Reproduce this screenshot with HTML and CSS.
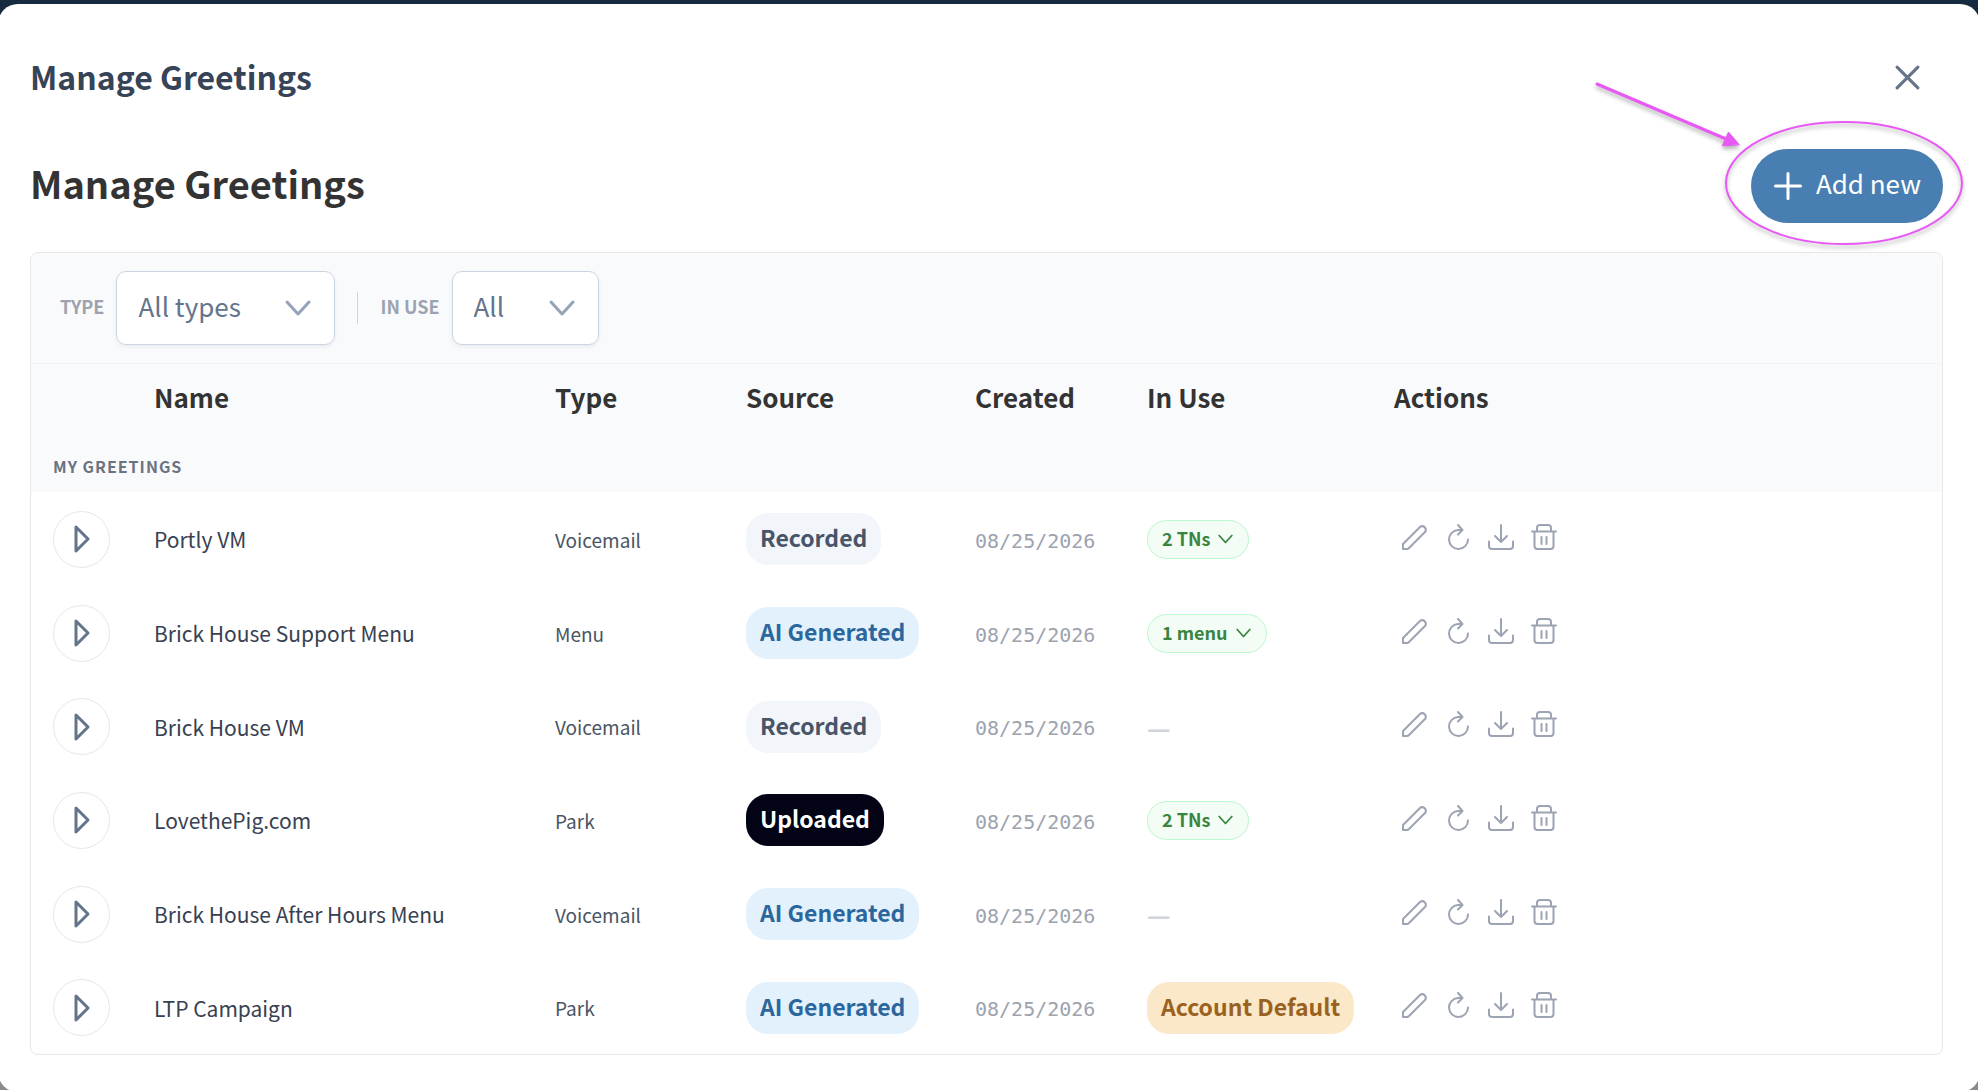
FILE: index.html
```html
<!DOCTYPE html>
<html lang="en">
<head>
  <meta charset="UTF-8">
  <meta name="viewport" content="width=device-width, initial-scale=1.0">
  <title>Manage Greetings</title>
  <link rel="stylesheet" href="styles.css">
</head>
<body>
<svg class="sprite" aria-hidden="true">
  <symbol id="play" viewBox="0 0 16 28"><path d="M2 2v24l12-12z"/></symbol>
  <symbol id="chevron" viewBox="0 0 26 16"><path d="M2 2l11 12L24 2"/></symbol>
  <symbol id="edit" viewBox="0 0 26 26"><path d="M1 25v-5L18.500 2.500a3.800 3.800 0 0 1 5 5L7 24q-1 1-2 1z"/></symbol>
  <symbol id="redo" viewBox="0 0 26 26"><path d="M17 6H13A9.500 9.500 0 1 0 23 15.500M13 1l4.500 5L13 10.500"/></symbol>
  <symbol id="download" viewBox="0 0 26 26"><path d="M13 1v17M7 12l6 6 6-6M1 17.500V22q0 3 3 3h18q3 0 3-3v-4.500"/></symbol>
  <symbol id="trash" viewBox="0 0 26 26"><path d="M1 7.500h24M3.500 7.500V22q0 3 3 3h13q3 0 3-3V7.500M6 7.500V4q0-3 3-3h8q3 0 3 3v3.500M10.500 13v7M15.500 13v7"/></symbol>
</svg>

<div class="modal">
  <header class="modal-header">
    <h1>Manage Greetings</h1>
    <button class="btn-close" aria-label="Close">
      <svg viewBox="0 0 24 24"><path d="M2 2l20 20M22 2L2 22"/></svg>
    </button>
  </header>

  <div class="title-bar">
    <h2>Manage Greetings</h2>
    <div class="add-wrap">
      <button class="btn-add">
        <svg viewBox="0 0 28 28"><path d="M14 1.500v25M1.500 14h25"/></svg>
        <span>Add new</span>
      </button>
      <svg class="callout" viewBox="0 0 372 166" aria-hidden="true">
        <ellipse cx="249" cy="102" rx="118" ry="61"/>
        <path class="line" d="M2 3L131 58"/>
        <path class="head" d="M144 63.500L133.500 51L127.500 64.500z"/>
      </svg>
    </div>
  </div>

  <section class="card">
    <div class="filters">
      <label for="type">Type</label>
      <div class="select select-type">
        <select id="type"><option>All types</option></select>
        <svg><use href="#chevron"/></svg>
      </div>
      <span class="divider"></span>
      <label for="inuse">In use</label>
      <div class="select select-use">
        <select id="inuse"><option>All</option></select>
        <svg><use href="#chevron"/></svg>
      </div>
    </div>

    <table>
      <colgroup>
        <col class="c-play"><col class="c-name"><col class="c-type"><col class="c-source"><col class="c-created"><col class="c-use"><col>
      </colgroup>
      <thead>
        <tr>
          <th></th>
          <th>Name</th>
          <th>Type</th>
          <th>Source</th>
          <th>Created</th>
          <th>In Use</th>
          <th>Actions</th>
        </tr>
        <tr class="group"><th colspan="7">My greetings</th></tr>
      </thead>
      <tbody id="rows"></tbody>
    </table>
  </section>
</div>

<script>
  const greetings = [
    ["Portly VM", "Voicemail", "Recorded", "2 TNs"],
    ["Brick House Support Menu", "Menu", "AI Generated", "1 menu"],
    ["Brick House VM", "Voicemail", "Recorded", ""],
    ["LovethePig.com", "Park", "Uploaded", "2 TNs"],
    ["Brick House After Hours Menu", "Voicemail", "AI Generated", ""],
    ["LTP Campaign", "Park", "AI Generated", "Account Default"]
  ];

  const badgeClass = { "Recorded": "recorded", "AI Generated": "ai", "Uploaded": "uploaded" };
  const icon = (name) => `<svg><use href="#${name}"/></svg>`;

  const usage = (text) => {
    if (!text) return `<span class="none">—</span>`;
    if (text === "Account Default") return `<span class="badge default">${text}</span>`;
    return `<button class="usage">${text}${icon("chevron")}</button>`;
  };

  const actions = ["edit", "redo", "download", "trash"]
    .map(a => `<button aria-label="${a}">${icon(a)}</button>`).join('');

  document.getElementById("rows").innerHTML = greetings.map(([name, type, source, use]) => `
    <tr>
      <td><button class="btn-play" aria-label="Play ${name}">${icon("play")}</button></td>
      <td class="name">${name}</td>
      <td class="type">${type}</td>
      <td><span class="badge ${badgeClass[source]}">${source}</span></td>
      <td class="created">08/25/2026</td>
      <td>${usage(use)}</td>
      <td><div class="actions">${actions}</div></td>
    </tr>`).join('');
</script>
</body>
</html>
```
FILE: styles.css
```css
* {
  box-sizing: border-box;
}
body {
  margin: 0;
  padding-top: 4px;
  min-height: 100vh;
  background: linear-gradient(#172b40 50%, #8a8a8a 50%);
  font-family: "Noto Sans CJK SC", "Noto Sans", sans-serif;
  color: #333;
  overflow: hidden;
}
button, select {
  font-family: inherit;
  color: inherit;
  margin: 0;
  padding: 0;
  border: 0;
  background: none;
  cursor: pointer;
}
svg {
  display: block;
  fill: none;
  stroke: currentColor;
  stroke-width: 2;
  stroke-linecap: round;
  stroke-linejoin: round;
  overflow: visible;
}
symbol {
  overflow: visible;
}
.sprite {
  position: absolute;
  width: 0;
  height: 0;
}
.modal {
  min-height: calc(100vh - 2px);
  margin: 0 -2px;
  padding: 45px 37px 34px 32px;
  background: #fff;
  border-radius: 20px;
}
.modal-header {
  display: flex;
  justify-content: space-between;
  align-items: center;
  height: 56px;
  padding-right: 23px;
}
h1, h2 {
  margin: 0;
  font-weight: 600;
}
h1 {
  padding-bottom: 2px;
  font-size: 32px;
  line-height: 48px;
  color: #374357;
}
.btn-close {
  color: #64748b;
}
.btn-close svg {
  width: 25px;
  height: 25px;
  stroke-width: 3;
}
.title-bar {
  display: flex;
  justify-content: space-between;
  align-items: center;
  margin: 44px 0 29px;
}
h2 {
  padding-bottom: 6px;
  font-size: 38px;
  line-height: 56px;
}
.add-wrap {
  position: relative;
}
.btn-add {
  display: flex;
  align-items: center;
  gap: 14px;
  height: 74px;
  padding: 0 22px 0 23px;
  border-radius: 37px;
  background: #487eb1;
  color: #fff;
  font-size: 26px;
  line-height: 36px;
}
.btn-add span {
  padding-bottom: 6px;
}
.btn-add svg {
  width: 28px;
  height: 28px;
  stroke-width: 3;
}
/* highlight drawn over the button */
.callout {
  position: absolute;
  right: -24px;
  top: -68px;
  width: 372px;
  height: 166px;
  color: #e858f5;
  pointer-events: none;
  filter: drop-shadow(0 3px 2px rgba(0, 0, 0, 0.3));
}
.callout .line {
  stroke-width: 3;
}
.callout .head {
  fill: currentColor;
  stroke-width: 1;
}
.card {
  border: 1px solid #e5e7eb;
  border-radius: 8px;
  overflow: hidden;
}
.filters {
  display: flex;
  align-items: center;
  height: 111px;
  padding: 0 29px;
  background: #f9fafc;
  border-bottom: 1px solid #f1f3f5;
}
.filters label {
  padding-bottom: 4px;
  font-size: 18px;
  font-weight: 700;
  line-height: 24px;
  text-transform: uppercase;
  color: #9ca3af;
}
.select {
  position: relative;
  height: 74px;
  margin-left: 12px;
}
.select-type {
  width: 219px;
}
.select-use {
  width: 147px;
}
.select select {
  appearance: none;
  width: 100%;
  height: 100%;
  padding: 0 60px 5px 21px;
  border: 1px solid #cbd5e1;
  border-radius: 10px;
  background: #fff;
  box-shadow: 0 2px 4px rgba(15, 23, 42, 0.06);
  font-size: 26px;
  line-height: 36px;
  color: #64748b;
}
.select svg {
  position: absolute;
  top: 29px;
  right: 24px;
  width: 26px;
  height: 16px;
  color: #94a3b8;
  stroke-width: 3;
  pointer-events: none;
}
.divider {
  width: 1px;
  height: 32px;
  margin: 0 22px;
  background: #d1d5db;
}
table {
  width: 100%;
  table-layout: fixed;
  border-collapse: collapse;
}
.c-play { width: 101px; }
.c-name { width: 401px; }
.c-type { width: 191px; }
.c-source { width: 229px; }
.c-created { width: 172px; }
.c-use { width: 247px; }
th, td {
  padding: 0 0 0 22px;
  text-align: left;
  white-space: nowrap;
}
thead {
  background: #f9fafc;
}
th {
  height: 70px;
  padding-bottom: 4px;
  font-size: 26px;
  line-height: 36px;
  font-weight: 700;
}
.group th {
  height: 58px;
  padding: 6px 0 0 22px;
  font-size: 16px;
  line-height: 24px;
  letter-spacing: 1px;
  text-transform: uppercase;
  color: #6b7280;
}
td {
  height: 94px;
}
tr:nth-child(3n) td {
  height: 93px;
}
.name {
  font-size: 21px;
  color: #374151;
}
.type {
  font-size: 19px;
  color: #4b5563;
}
.created {
  padding-top: 3px;
  font-family: "DejaVu Sans Mono", monospace;
  font-size: 20px;
  color: #9ca3af;
}
.none {
  font-size: 26px;
  line-height: 36px;
  font-weight: 600;
  color: #d1d5db;
}
.btn-play {
  display: flex;
  align-items: center;
  justify-content: center;
  width: 57px;
  height: 57px;
  border: 1px solid #e2e8f0;
  border-radius: 50%;
  color: #64748b;
}
.btn-play svg {
  width: 16px;
  height: 28px;
  stroke-width: 3;
}
.badge {
  display: inline-block;
  height: 52px;
  padding: 0 14px;
  border-radius: 22px;
  font-size: 23px;
  line-height: 48px;
  font-weight: 700;
  vertical-align: middle;
}
.recorded { background: #f2f5fa; color: #475569; }
.ai { background: #e3f1fd; color: #2b669c; }
.uploaded { background: #020314; color: #fff; }
.default { background: #fbe8c9; color: #9a6220; }
.usage {
  display: flex;
  align-items: center;
  gap: 8px;
  height: 39px;
  padding: 0 15px 3px 14px;
  border: 1px solid #bbf7d0;
  border-radius: 20px;
  background: #f3fcf5;
  color: #388440;
  font-size: 18px;
  line-height: 24px;
  font-weight: 700;
}
.usage svg {
  width: 15px;
  height: 10px;
  margin-top: 3px;
  stroke-width: 3;
}
.actions {
  display: flex;
  gap: 17px;
  padding: 0 0 5px 8px;
  color: #9ca3b2;
}
.actions svg {
  width: 26px;
  height: 26px;
}
```
